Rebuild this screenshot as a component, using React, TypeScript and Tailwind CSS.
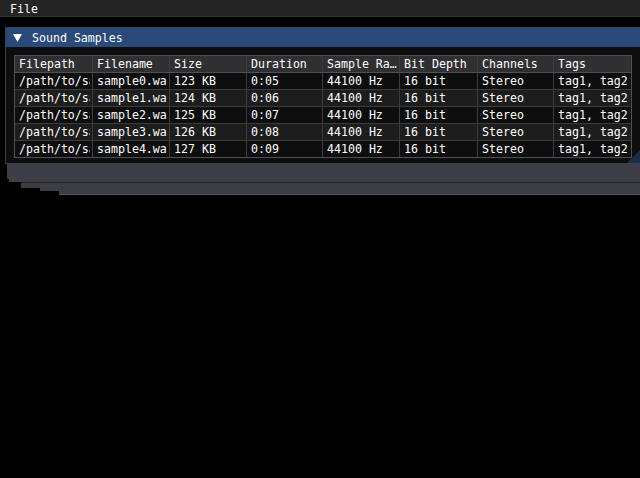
import React from "react";

const headers = ["Filepath", "Filename", "Size", "Duration", "Sample Rate", "Bit Depth", "Channels", "Tags"];

const rows = [0, 1, 2, 3, 4].map((i) => [
  `/path/to/sample${i}.wav`,
  `sample${i}.wav`,
  `${123 + i} KB`,
  `0:0${5 + i}`,
  "44100 Hz",
  "16 bit",
  "Stereo",
  "tag1, tag2",
]);

function Cell({ text, first, ellipsis }: { text: string; first: boolean; ellipsis?: boolean }) {
  return (
    <div className={`${first ? "" : "border-l border-[#3B3B40]"} pl-[4px] pr-[2px] h-[16px] flex items-center min-w-0`}>
      <div className={`overflow-hidden whitespace-nowrap leading-[16px] w-full ${ellipsis ? "text-ellipsis" : ""}`}>{text}</div>
    </div>
  );
}

export default function App() {
  return (
    <div className="w-[640px] h-[478px] bg-black overflow-hidden text-white font-['DejaVu_Sans_Mono',monospace] text-[11.6px]">
      {/* Main menu bar */}
      <div className="h-[17px] bg-[#242424] border-b border-[#2e2e2e] flex items-center pl-[10px]">
        <span className="leading-[16px] mt-[1px]">File</span>
      </div>

      {/* Window */}
      <div className="mt-[10px] ml-[5px] w-[636px] h-[137px] border border-[#3d3d46] bg-[#0e0e0e] relative flex flex-col">
        <div className="h-[19px] bg-[#294A7A] flex items-center shrink-0">
          <svg width="9" height="8" viewBox="0 0 9 8" className="ml-[7px] mt-[1px]">
            <polygon points="0,0 9,0 4.5,8" fill="#ffffff" />
          </svg>
          <span className="ml-[10px] leading-[16px] mt-[1px]">Sound Samples</span>
        </div>
        <div className="pt-[8px] pl-[8px]">
          <div className="w-[618px] border border-[#4F4F59]">
            <div className="grid grid-cols-[77px_77px_77px_76px_77px_78px_76px_78px] bg-[#303033] border-b border-[#4F4F59]">
              {headers.map((h, j) => (
                <Cell key={h} text={h} first={j === 0} ellipsis />
              ))}
            </div>
            {rows.map((r, i) => (
              <div
                key={i}
                className={`grid grid-cols-[77px_77px_77px_76px_77px_78px_76px_78px] ${i % 2 === 1 ? "bg-[#1d1d1d]" : "bg-[#0e0e0e]"} ${i < 4 ? "border-b border-[#3B3B40]" : ""}`}
              >
                {r.map((c, j) => (
                  <Cell key={j} text={c} first={j === 0} />
                ))}
              </div>
            ))}
          </div>
        </div>
        {/* resize grip */}
        <svg width="13" height="13" viewBox="0 0 13 13" className="absolute right-0 bottom-0">
          <polygon points="13,0 13,13 0,13" fill="#1a2f47" />
        </svg>
      </div>

      {/* stale frame remnants */}
      <div className="ml-[7px] h-[15px] bg-[#3d3d46]" />
      <div className="ml-[9px] h-[3px] bg-[#3d3d46]" />
      <div className="ml-[21px] h-[1px] bg-[#26262b]" />
      <div className="ml-[21px] h-[5px] bg-[#3d3d46]" />
      <div className="ml-[40px] h-[3px] bg-[#3d3d46]" />
      <div className="ml-[59px] h-[3px] bg-[#3d3d46]" />
      <div className="ml-[59px] h-[1px] bg-[#55555f]" />
    </div>
  );
}
